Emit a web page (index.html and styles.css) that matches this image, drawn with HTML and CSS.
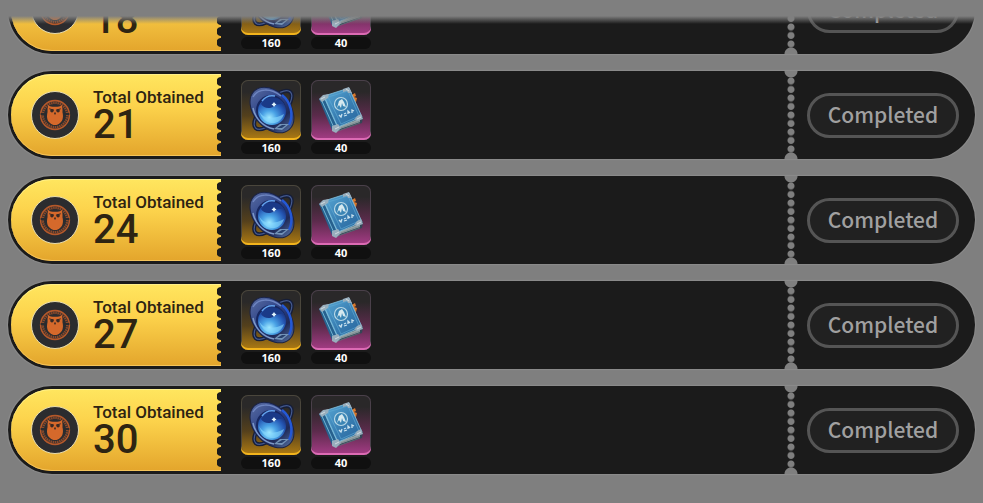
FILE: index.html
```html
<!DOCTYPE html>
<html lang="en">
<head>
  <meta charset="UTF-8">
  <meta name="viewport" content="width=device-width, initial-scale=1.0">
  <title>Rewards</title>
  <link rel="stylesheet" href="styles.css">
</head>
<body>
  <!-- shared artwork -->
  <svg class="sprites" aria-hidden="true">
    <defs>
      <linearGradient id="ring-fill" x1="0" y1="0" x2="1" y2="0">
        <stop offset="0" stop-color="#51659c"></stop>
        <stop offset="0.45" stop-color="#2a3f86"></stop>
        <stop offset="0.75" stop-color="#1f2a58"></stop>
        <stop offset="1" stop-color="#4a6292"></stop>
      </linearGradient>
      <radialGradient id="orb-fill" cx="0.4" cy="0.75" r="0.75">
        <stop offset="0" stop-color="#a5ecff"></stop>
        <stop offset="0.35" stop-color="#4aa3e6"></stop>
        <stop offset="0.75" stop-color="#2456b4"></stop>
        <stop offset="1" stop-color="#1a3078"></stop>
      </radialGradient>
      <linearGradient id="cover-fill" x1="0" y1="0" x2="1" y2="1">
        <stop offset="0" stop-color="#5aa9d6"></stop>
        <stop offset="0.5" stop-color="#3a80b4"></stop>
        <stop offset="1" stop-color="#28639c"></stop>
      </linearGradient>
    </defs>

    <symbol id="owl" viewBox="0 0 48 48">
      <circle cx="24" cy="24" r="15" fill="none" stroke="#b4582a" stroke-width="1.6"></circle>
      <circle cx="24" cy="24" r="12.7" fill="none" stroke="#8a4a2b" stroke-width="2.400" stroke-dasharray="1.6 0.7"></circle>
      <path d="M9 23h5M34 23h5" stroke="#2b2b2d" stroke-width="2"></path>
      <path d="M17 13.500c1.500 1.500 3.500 2 7 2s5.500-.5 7-2c.8 2.500 1 5 .8 7.500 1 4 .7 8.500-2.300 11-1.500 1.500-3.500 2.500-5.500 2.500s-4-1-5.500-2.500c-3-2.500-3.300-7-2.300-11-.2-2.500 0-5 .8-7.500z" fill="#d5692b"></path>
      <circle cx="20.800" cy="19.500" r="1.800" fill="#3a2a24"></circle>
      <circle cx="27.200" cy="19.500" r="1.800" fill="#3a2a24"></circle>
      <path d="M18 17.500l5 1.500M30 17.500l-5 1.500" stroke="#3a2a24" stroke-width="1"></path>
      <path d="M24 20.500l1 2-1 1.500-1-1.500z" fill="#3a2a24"></path>
    </symbol>

    <symbol id="orb" viewBox="0 0 60 60">
      <ellipse cx="32" cy="30" rx="25" ry="10" transform="rotate(-46 32 30)" fill="none" stroke="#161e38" stroke-width="4"></ellipse>
      <ellipse cx="32" cy="30" rx="25" ry="10" transform="rotate(-46 32 30)" fill="none" stroke="#42588e" stroke-width="1.200"></ellipse>
      <ellipse cx="31" cy="30" rx="26" ry="18" transform="rotate(48 31 30)" fill="url(#ring-fill)" stroke="#1a2347" stroke-width="1"></ellipse>
      <path d="M12 17C17 8 30 8 40 16" fill="none" stroke="#6d84c0" stroke-width="1.500"></path>
      <path d="M12 28c2 10 10 19 21 21" fill="none" stroke="#7c98c8" stroke-width="1.500"></path>
      <path d="M41 15c9 7 12 20 7 30" fill="none" stroke="#2458d4" stroke-width="2.500"></path>
      <circle cx="30" cy="30" r="15" fill="#182860"></circle>
      <circle cx="31" cy="31" r="14" fill="url(#orb-fill)"></circle>
      <path d="M20 24c5-8 17-9 23 0-7-1-9 3-14 4-4 .5-7-1-9-4z" fill="#1a3a88"></path>
      <path d="M18 31c4 8 14 9 25 3-2 6-7 10-13 9-5-1-10-5-12-12z" fill="#8bdcff" opacity="0.600"></path>
      <path d="M21 21c3-4 8-6 13-5" fill="none" stroke="#63a3ef" stroke-width="1.500"></path>
      <path d="M33 22l1 1.500 1.500 1-1.500 1-1 1.500-1-1.500-1.500-1 1.500-1z" fill="#e3f7ff"></path>
      <path d="M33 49l6-5 9 0-7 6z" fill="#7393b8"></path>
      <path d="M36 48l5-3 4 0-4 3z" fill="#28406c"></path>
    </symbol>

    <symbol id="book" viewBox="0 0 60 60">
      <path d="M39 16l5-3 1 3-2 1 3 1-1 4-5-2z" fill="#d9772a"></path>
      <path d="M24 52l27-9 1-6-4-3-24 12z" fill="#344656"></path>
      <path d="M26 50l23-8v-3l-23 8z" fill="#96a5a8"></path>
      <path d="M27 51l22-8M27 49l22-8" stroke="#6a7b84" stroke-width="0.600"></path>
      <path d="M8 19l7-4 14 33-5 4-3-2z" fill="#27618e"></path>
      <path d="M10 19l14 31M13 17l14 31" stroke="#77bddb" stroke-width="0.900"></path>
      <path d="M13 16l25-8 13 29-24 10z" fill="url(#cover-fill)" stroke="#86c4df" stroke-width="0.800"></path>
      <path d="M17 17l20-6 11 25-18 8z" fill="none" stroke="#62acd5" stroke-width="0.600"></path>
      <path d="M8 19l4-4 6-1-1 4-6 4zM32 9l6-2 3 6-4 0-1-2-4 1zM46 36l4-2 2 5-6 2-3-1zM21 46l6-2 3 4-5 5-4-2z" fill="#98aebd"></path>
      <path d="M10 19l4-2M35 9l3 2M46 39l4-2M24 49l4-2" stroke="#d0dadf" stroke-width="1"></path>
      <circle cx="30" cy="24" r="6.500" fill="#3a85b5" stroke="#b9d8e6" stroke-width="1.200"></circle>
      <path d="M26 28l2-7 3-2 2 3 2 5-3-1-1-3-1 5-2-3z" fill="#d5e8ef"></path>
      <path d="M28 35l2 2 1-3M33 36l3-1M33 34l2-1M37 34v-3l2 2M41 33v-3l2 1" fill="none" stroke="#c9e2ef" stroke-width="1.300"></path>
    </symbol>
  </svg>

  <main class="reward-list">
    <section class="ticket">
      <div class="ticket-head">
        <svg class="badge"><use href="#owl"></use></svg>
        <div class="total">
          <span class="label">Total Obtained</span>
          <span class="value">18</span>
        </div>
      </div>
      <div class="items">
        <div class="item">
          <svg class="tile gold"><use href="#orb"></use></svg>
          <span class="count">160</span>
        </div>
        <div class="item">
          <svg class="tile pink"><use href="#book"></use></svg>
          <span class="count">40</span>
        </div>
      </div>
      <div class="tear"></div>
      <div class="ticket-stub">
        <button class="status" disabled>Completed</button>
      </div>
    </section>

    <section class="ticket">
      <div class="ticket-head">
        <svg class="badge"><use href="#owl"></use></svg>
        <div class="total">
          <span class="label">Total Obtained</span>
          <span class="value">21</span>
        </div>
      </div>
      <div class="items">
        <div class="item">
          <svg class="tile gold"><use href="#orb"></use></svg>
          <span class="count">160</span>
        </div>
        <div class="item">
          <svg class="tile pink"><use href="#book"></use></svg>
          <span class="count">40</span>
        </div>
      </div>
      <div class="tear"></div>
      <div class="ticket-stub">
        <button class="status" disabled>Completed</button>
      </div>
    </section>

    <section class="ticket">
      <div class="ticket-head">
        <svg class="badge"><use href="#owl"></use></svg>
        <div class="total">
          <span class="label">Total Obtained</span>
          <span class="value">24</span>
        </div>
      </div>
      <div class="items">
        <div class="item">
          <svg class="tile gold"><use href="#orb"></use></svg>
          <span class="count">160</span>
        </div>
        <div class="item">
          <svg class="tile pink"><use href="#book"></use></svg>
          <span class="count">40</span>
        </div>
      </div>
      <div class="tear"></div>
      <div class="ticket-stub">
        <button class="status" disabled>Completed</button>
      </div>
    </section>

    <section class="ticket">
      <div class="ticket-head">
        <svg class="badge"><use href="#owl"></use></svg>
        <div class="total">
          <span class="label">Total Obtained</span>
          <span class="value">27</span>
        </div>
      </div>
      <div class="items">
        <div class="item">
          <svg class="tile gold"><use href="#orb"></use></svg>
          <span class="count">160</span>
        </div>
        <div class="item">
          <svg class="tile pink"><use href="#book"></use></svg>
          <span class="count">40</span>
        </div>
      </div>
      <div class="tear"></div>
      <div class="ticket-stub">
        <button class="status" disabled>Completed</button>
      </div>
    </section>

    <section class="ticket">
      <div class="ticket-head">
        <svg class="badge"><use href="#owl"></use></svg>
        <div class="total">
          <span class="label">Total Obtained</span>
          <span class="value">30</span>
        </div>
      </div>
      <div class="items">
        <div class="item">
          <svg class="tile gold"><use href="#orb"></use></svg>
          <span class="count">160</span>
        </div>
        <div class="item">
          <svg class="tile pink"><use href="#book"></use></svg>
          <span class="count">40</span>
        </div>
      </div>
      <div class="tear"></div>
      <div class="ticket-stub">
        <button class="status" disabled>Completed</button>
      </div>
    </section>
  </main>
</body>
</html>
```

FILE: styles.css
```css
* {
  box-sizing: border-box;
}
body {
  margin: 0;
  font-family: Roboto, 'Noto Sans', sans-serif;
  background-color: #7f7f7f;
}
.sprites {
  position: absolute;
  width: 0;
  height: 0;
}
.reward-list {
  position: relative;
  display: flex;
  flex-direction: column;
  justify-content: flex-end;
  gap: 17px;
  height: 100vh;
  padding: 0 8px 29px;
  overflow: hidden;
}
/* fades out the row scrolled under the top edge */
.reward-list::before {
  content: '';
  position: absolute;
  top: 0;
  left: 0;
  right: 0;
  height: 24px;
  z-index: 1;
  background: linear-gradient(#7f7f7f 16px, rgba(127, 127, 127, 0));
}
.ticket {
  display: flex;
  flex-shrink: 0;
  height: 88px;
  padding: 3px 16px 3px 3px;
  border-radius: 44px;
  background-color: #1b1b1b;
  box-shadow: 0 0 1px 1px rgba(160, 160, 160, 0.4);
}
.ticket-head {
  position: relative;
  display: flex;
  align-items: center;
  gap: 14px;
  width: 210px;
  padding-left: 20px;
  border-radius: 41px 0 0 41px;
  background: linear-gradient(#ffe65f, #fcd24b 40%, #e3a52c);
  box-shadow: inset 0 1px 0 #fff08a, inset 0 -1px 0 #f5c45a;
}
.ticket-head::after {
  content: '';
  position: absolute;
  top: 2px;
  right: 0;
  bottom: 2px;
  width: 4px;
  background: radial-gradient(circle at 4px 50%, #1b1b1b 4px, transparent 5px) 0 0 / 4px 11px;
}
.badge {
  width: 48px;
  height: 48px;
  border: 1px solid #e8dcae;
  border-radius: 50%;
  background-color: #2b2c2f;
}
.total {
  display: flex;
  flex-direction: column;
  padding-top: 2px;
  color: #2e2412;
}
.label {
  font-size: 17px;
  font-weight: 500;
  line-height: 18px;
  white-space: nowrap;
}
.value {
  font-size: 40px;
  font-weight: 500;
  line-height: 38px;
}
.items {
  display: flex;
  flex: 1;
  gap: 10px;
  padding: 6px 0 0 20px;
}
.item {
  display: flex;
  flex-direction: column;
  gap: 2px;
  width: 60px;
}
.tile {
  width: 60px;
  height: 60px;
  border-radius: 7px;
}
.gold {
  background: linear-gradient(#2a2929 20%, #54401c 60%, #b07c12);
  box-shadow: inset 0 -2px 0 #f3b41c, inset 0 0 0 1px #4a463c;
}
.pink {
  background: linear-gradient(#2a2829 20%, #5c2b4c 60%, #a63c86);
  box-shadow: inset 0 -2px 0 #dc6bb4, inset 0 0 0 1px #4a404a;
}
.count {
  border-radius: 6px;
  background-color: #101010;
  color: #fff;
  font-family: 'Open Sans', 'Noto Sans', sans-serif;
  font-size: 11px;
  font-weight: 700;
  line-height: 12px;
  text-align: center;
}
/* perforation between the rewards and the stub */
.tear {
  width: 14px;
  margin: -3px 0;
  padding: 6px 0;
  background-image:
    radial-gradient(circle at 7px 0, #7f7f7f 6px, transparent 7px),
    radial-gradient(circle at 7px 88px, #7f7f7f 6px, transparent 7px),
    radial-gradient(circle, #7f7f7f 3px, transparent 4px);
  background-origin: border-box, border-box, content-box;
  background-size: 14px 88px, 14px 88px, 14px 8px;
  background-repeat: no-repeat, no-repeat, no-repeat space;
}
.ticket-stub {
  display: flex;
  align-items: center;
  padding-left: 9px;
}
.status {
  width: 152px;
  height: 45px;
  padding: 0 0 2px;
  border: 3px solid #555;
  border-radius: 23px;
  background-color: #212121;
  color: #a0a0a0;
  font-family: 'Noto Sans CJK SC', 'Noto Sans', sans-serif;
  font-size: 21px;
  font-weight: 500;
}
```
